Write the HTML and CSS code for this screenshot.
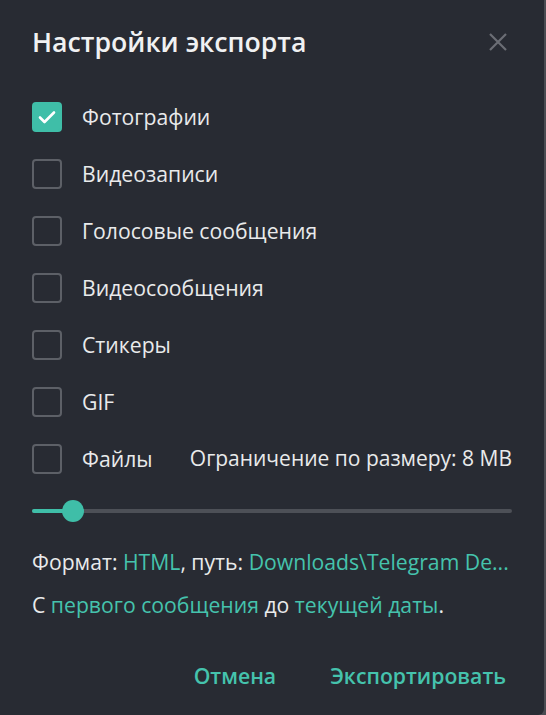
FILE: index.html
```html
<!DOCTYPE html>
<html lang="ru">
<head>
<meta charset="utf-8">
<title>Настройки экспорта</title>
<link rel="stylesheet" href="styles.css">
</head>
<body>
<div class="dialog">
  <div class="header">
    <div class="title">Настройки экспорта</div>
    <svg class="close" width="20" height="20" viewBox="0 0 20 20"><path d="M2 2 L18 18 M18 2 L2 18" stroke="currentColor" stroke-width="2.2" fill="none"/></svg>
  </div>
  <div class="options">
    <div class="row">
      <span class="box checked"><svg width="18" height="14" viewBox="0 0 18 14"><path d="M2 7.5 L6.5 12 L16 2.5" stroke="#fff" stroke-width="2.6" fill="none" stroke-linecap="round" stroke-linejoin="round"/></svg></span>
      <span class="label">Фотографии</span>
    </div>
    <div class="row"><span class="box"></span><span class="label">Видеозаписи</span></div>
    <div class="row"><span class="box"></span><span class="label">Голосовые сообщения</span></div>
    <div class="row"><span class="box"></span><span class="label">Видеосообщения</span></div>
    <div class="row"><span class="box"></span><span class="label">Стикеры</span></div>
    <div class="row"><span class="box"></span><span class="label">GIF</span></div>
    <div class="row">
      <span class="box"></span><span class="label">Файлы</span>
      <span class="limit">Ограничение по размеру: 8 MB</span>
    </div>
  </div>
  <div class="slider">
    <div class="track"><div class="fill"></div></div>
    <div class="thumb"></div>
  </div>
  <div class="info">
    <p>Формат: <span class="link">HTML</span>, путь: <span class="link">Downloads\Telegram De...</span></p>
    <p>С <span class="link">первого сообщения</span> до <span class="link">текущей даты</span>.</p>
  </div>
  <div class="buttons">
    <span class="btn">Отмена</span>
    <span class="btn">Экспортировать</span>
  </div>
</div>
</body>
</html>
```
FILE: styles.css
```css
html, body {
  margin: 0;
  padding: 0;
  background: #4a4c52;
}
body {
  width: 546px;
  height: 715px;
  overflow: hidden;
  font-family: "Open Sans", "Noto Sans", sans-serif;
  color: #e9eaeb;
}
.dialog {
  width: 544px;
  height: 715px;
  background: #282b33;
  border-bottom-right-radius: 6px;
  box-sizing: border-box;
  padding: 0 32px;
  display: flex;
  flex-direction: column;
}
.header {
  height: 88px;
  display: flex;
  align-items: flex-start;
  justify-content: space-between;
}
.title {
  margin-top: 22px;
  font-size: 26.7px;
  font-weight: 600;
  line-height: 40px;
  color: #f0f1f2;
}
.close {
  margin-top: 32px;
  margin-right: 4px;
  color: #6b6e75;
}
.options {
  display: flex;
  flex-direction: column;
}
.row {
  height: 57px;
  display: flex;
  align-items: center;
}
.box {
  width: 30px;
  height: 30px;
  box-sizing: border-box;
  border: 2px solid #5d6067;
  border-radius: 4px;
  display: flex;
  align-items: center;
  justify-content: center;
  flex: none;
}
.box.checked {
  background: #3fbea8;
  border-color: #3fbea8;
}
.label {
  margin-left: 20px;
  font-size: 21.2px;
  line-height: 27px;
}
.limit {
  margin-left: auto;
  font-size: 21px;
  line-height: 27px;
}
.slider {
  position: relative;
  height: 48px;
  margin-top: 0;
  display: flex;
  align-items: center;
}
.track {
  width: 100%;
  height: 4px;
  border-radius: 2px;
  background: #4d5057;
  overflow: hidden;
}
.fill {
  width: 42px;
  height: 100%;
  background: #3fbea8;
}
.thumb {
  position: absolute;
  left: 30px;
  top: 13px;
  width: 22px;
  height: 22px;
  border-radius: 50%;
  background: #3fbea8;
}
.info {
  margin-top: 13px;
  display: flex;
  flex-direction: column;
  gap: 16px;
}
.info p {
  margin: 0;
  font-size: 21.2px;
  line-height: 27px;
}
.link {
  color: #45c3ad;
}
.buttons {
  margin-top: auto;
  margin-bottom: 24px;
  display: flex;
  justify-content: flex-end;
  gap: 54px;
  padding-right: 6px;
}
.btn {
  font-size: 21.2px;
  font-weight: 600;
  color: #45c3ad;
  line-height: 30px;
}
```
